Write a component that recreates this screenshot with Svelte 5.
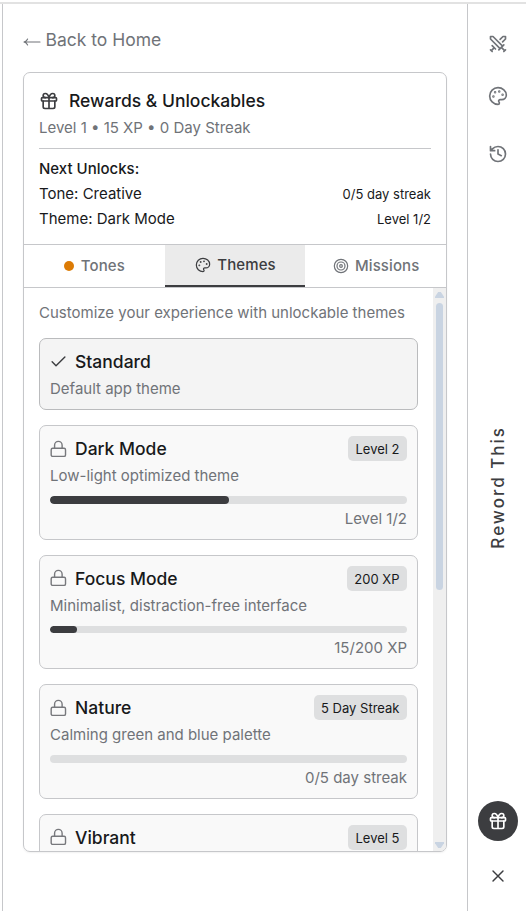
<script>
  const themes = [
    { name: 'Dark Mode', text: 'Low-light optimized theme', badge: 'Level 2', progress: 'Level 1/2', pct: 50 },
    { name: 'Focus Mode', text: 'Minimalist, distraction-free interface', badge: '200 XP', progress: '15/200 XP', pct: 7.5 },
    { name: 'Nature', text: 'Calming green and blue palette', badge: '5 Day Streak', progress: '0/5 day streak', pct: 0 },
    { name: 'Vibrant', badge: 'Level 5' }
  ];
</script>

{#snippet gift(size, width)}
  <svg width={size} height={size} viewBox="0 0 24 24" stroke-width={width}>
    <rect x="3" y="8" width="18" height="4" rx="1" />
    <path d="M12 8v13M19 12v7a2 2 0 0 1-2 2H7a2 2 0 0 1-2-2v-7" />
    <path d="M7.5 8a2.5 2.5 0 0 1 0-5A4.8 8 0 0 1 12 8a4.8 8 0 0 1 4.5-5 2.5 2.5 0 0 1 0 5" />
  </svg>
{/snippet}

{#snippet palette(size, width)}
  <svg width={size} height={size} viewBox="0 0 24 24" stroke-width={width}>
    <circle cx="13.5" cy="6.5" r=".5" fill="currentColor" />
    <circle cx="17.5" cy="10.5" r=".5" fill="currentColor" />
    <circle cx="8.5" cy="7.5" r=".5" fill="currentColor" />
    <circle cx="6.5" cy="12.5" r=".5" fill="currentColor" />
    <path d="M12 2C6.5 2 2 6.5 2 12s4.5 10 10 10c.926 0 1.648-.746 1.648-1.688 0-.437-.18-.835-.437-1.125-.29-.289-.438-.652-.438-1.125a1.64 1.64 0 0 1 1.668-1.668h1.996c3.051 0 5.555-2.503 5.555-5.554C21.965 6.012 17.461 2 12 2z" />
  </svg>
{/snippet}

<div class="app">
  <div class="topline"></div>
  <div class="shell">
    <main>
      <a class="back" href="#home">
        <svg width="18" height="12" viewBox="0 0 18 12" stroke-width="1.1"><path d="M1 6h16M4.6 3C4 4.6 2.8 5.5 1 6c1.8.5 3 1.4 3.6 3" /></svg>
        <span>Back to Home</span>
      </a>
      <section class="panel">
        <header>
          <h2>{@render gift(20, 2)}<span>Rewards &amp; Unlockables</span></h2>
          <p class="stats">Level 1 • 15 XP • 0 Day Streak</p>
          <div class="next">
            <div class="row"><strong>Next Unlocks:</strong></div>
            <div class="row"><span>Tone: Creative</span><small>0/5 day streak</small></div>
            <div class="row"><span>Theme: Dark Mode</span><small>Level 1/2</small></div>
          </div>
        </header>
        <nav>
          <button><i class="dot"></i><span>Tones</span></button>
          <button class="active">{@render palette(16, 1.8)}<span>Themes</span></button>
          <button>
            <svg width="16" height="16" viewBox="0 0 24 24" stroke-width="1.8"><circle cx="12" cy="12" r="10" /><circle cx="12" cy="12" r="6" /><circle cx="12" cy="12" r="2" /></svg>
            <span>Missions</span>
          </button>
        </nav>
        <div class="body">
          <div class="list">
            <p class="intro">Customize your experience with unlockable themes</p>
            <article class="card current">
              <div class="head">
                <svg width="17" height="17" viewBox="0 0 24 24" stroke-width="2"><path d="M21 5.5 8.5 18 3 12.5" /></svg>
                <h3>Standard</h3>
              </div>
              <p>Default app theme</p>
            </article>
            {#each themes as t}
              <article class="card">
                <div class="head">
                  <svg class="lock" width="17" height="18" viewBox="0 0 23 24" stroke-width="1.9"><rect x="1.6" y="11" width="19.4" height="11" rx="2" /><path d="M6.2 11V6.8a5 5 0 0 1 10.2 0V11" /></svg>
                  <h3>{t.name}</h3>
                  <span class="badge">{t.badge}</span>
                </div>
                {#if t.text}
                  <p>{t.text}</p>
                  <div class="track"><div class="fill" style="width: {t.pct}%"></div></div>
                  <div class="progress">{t.progress}</div>
                {/if}
              </article>
            {/each}
          </div>
          <div class="scroll">
            <i class="up"></i>
            <div class="thumb"></div>
            <i class="down"></i>
          </div>
        </div>
      </section>
    </main>
    <aside>
      <div class="tools">
        <svg width="20" height="20" viewBox="0 0 24 24" stroke-width="2">
          <path d="M14.5 17.5 3 6V3h3l11.5 11.5M13 19l6-6M16 16l4 4M19 21l2-2M14.5 6.5 18 3h3v3l-3.5 3.5M5 14l4 4M7 17l-3 3M3 19l2 2" />
        </svg>
        {@render palette(20, 2)}
        <svg width="20" height="20" viewBox="0 0 24 24" stroke-width="2">
          <path d="M3 12a9 9 0 1 0 9-9 9.75 9.75 0 0 0-6.74 2.74L3 8M3 3v5h5M12 7v5l4 2" />
        </svg>
      </div>
      <div class="brand">Reword This</div>
      <div class="bottom">
        <button class="round">{@render gift(20, 2)}</button>
        <svg width="20" height="20" viewBox="0 0 24 24" stroke-width="1.7"><path d="M18 6 6 18M6 6l12 12" /></svg>
      </div>
    </aside>
  </div>
</div>

<style>
  :global(body) { margin: 0; overflow: hidden; }
  .app, .app * { box-sizing: border-box; }
  .app { width: 526px; height: 911px; padding-top: 2px; display: flex; flex-direction: column; background: #fff; font-family: Inter, 'Liberation Sans', sans-serif; color: #18191b; font-size: 15px; }
  svg { display: block; flex: none; fill: none; stroke: currentColor; stroke-linecap: round; stroke-linejoin: round; }
  p, h2, h3 { margin: 0; font-weight: 400; }
  .topline { height: 2px; background: #e2e2e2; flex: none; }
  .shell { flex: 1; display: flex; margin-left: 2px; border-left: 1px solid #c6c7ca; min-height: 0; }
  main { width: 464px; padding: 24px 20px 0; display: flex; flex-direction: column; }
  .back { display: flex; align-items: center; gap: 4.5px; height: 24px; color: #707378; font-size: 17.5px; text-decoration: none; white-space: nowrap; }
  .back svg { margin-top: 3px; }
  .back span { margin-top: -2px; }
  .panel { margin-top: 20px; height: 780px; width: 424px; border: 1px solid #c6c7ca; border-radius: 7px; overflow: hidden; display: flex; flex-direction: column; box-shadow: 0 1px 2px rgba(0, 0, 0, .06); }
  header { height: 171px; padding: 17px 15px 0; flex: none; }
  h2 { display: flex; align-items: center; height: 22px; gap: 10px; font-size: 17.5px; font-weight: 500; color: #18191b; }
  h2 span { margin-top: -1px; }
  h2 :global(svg) { color: #3c3d40; }
  .stats { color: #707378; height: 20px; line-height: 20px; margin-top: 6px; }
  .next { margin-top: 10px; border-top: 1px solid #c6c7ca; padding-top: 7px; }
  .row { height: 25px; display: flex; justify-content: space-between; align-items: center; }
  .row strong { font-weight: 500; }
  .row small { font-size: 13px; line-height: 16px; margin-top: 1px; }
  nav { display: flex; height: 44px; border-top: 1px solid #c6c7ca; border-bottom: 1px solid #c6c7ca; flex: none; }
  button { border: 0; padding: 0; margin: 0; background: none; font: inherit; }
  nav button { flex: 1; display: flex; align-items: center; justify-content: center; gap: 7px; color: #707378; font-weight: 500; letter-spacing: .1px; }
  nav button span { margin-top: -1px; }
  nav .active { color: #3c3d40; background: #ebebeb; border-bottom: 2px solid #3c3d40; }
  nav .active :global(svg), nav button > svg { margin-right: -1px; margin-left: 1px; }
  .dot { width: 10px; height: 10px; border-radius: 50%; background: #dc7b05; }
  .body { flex: 1; display: flex; min-height: 0; }
  .list { flex: 1; padding: 15px 15px 0; overflow: hidden; }
  .intro { color: #707378; height: 20px; line-height: 20px; margin-bottom: 15px; white-space: nowrap; }
  .card { height: 114.4px; margin-bottom: 15.2px; border: 1px solid #c6c7ca; border-radius: 7px; background: #f9f9f9; padding: 10px; }
  .current { height: 72px; background: #f4f4f4; border-color: #babbbd; }
  .head { height: 25px; display: flex; align-items: center; gap: 8px; }
  .current .head svg { color: #3c3d40; }
  .lock { color: #77787c; }
  h3 { font-size: 17.5px; font-weight: 500; flex: 1; }
  .badge { height: 25px; line-height: 26.5px; border-radius: 5px; background: #dedfe0; padding: 0 7.5px; font-size: 13px; white-space: nowrap; }
  .card p { color: #707378; height: 20px; line-height: 20px; margin-top: 5px; white-space: nowrap; }
  .track { height: 7.6px; margin-top: 10px; border-radius: 4px; background: #dedfe0; overflow: hidden; }
  .fill { height: 100%; border-radius: 4px; background: #3c3d40; }
  .progress { color: #707378; text-align: right; height: 20px; line-height: 20px; margin-top: 5px; }
  .scroll { width: 13px; background: #efefef; display: flex; flex-direction: column; align-items: center; padding: 4px 0 3px; }
  .up, .down { width: 9px; height: 6px; background: #c9d4e2; clip-path: polygon(35% 0, 65% 0, 100% 80%, 100% 100%, 0 100%, 0 80%); }
  .down { clip-path: polygon(0 0, 100% 0, 100% 20%, 65% 100%, 35% 100%, 0 20%); margin-top: auto; }
  .thumb { width: 7px; height: 287px; border-radius: 4px; background: #c9d4e2; margin-top: 5px; }
  aside { flex: 1; border-left: 1px solid #c6c7ca; display: flex; flex-direction: column; align-items: center; color: #707378; padding: 30px 0 25px 2px; }
  .tools { display: flex; flex-direction: column; gap: 35px; }
  .tools :global(svg:nth-child(2)) { margin-top: -3px; margin-bottom: 3px; }
  .brand { margin-top: 262px; writing-mode: vertical-rl; transform: rotate(180deg); color: #3c3d40; font-size: 17px; letter-spacing: 2px; font-weight: 500; white-space: nowrap; }
  .bottom { margin-top: auto; display: flex; flex-direction: column; align-items: center; gap: 25px; color: #3c3d40; }
  .round { width: 40px; height: 40px; border-radius: 50%; background: #3c3d40; color: #fff; display: flex; align-items: center; justify-content: center; }
</style>
